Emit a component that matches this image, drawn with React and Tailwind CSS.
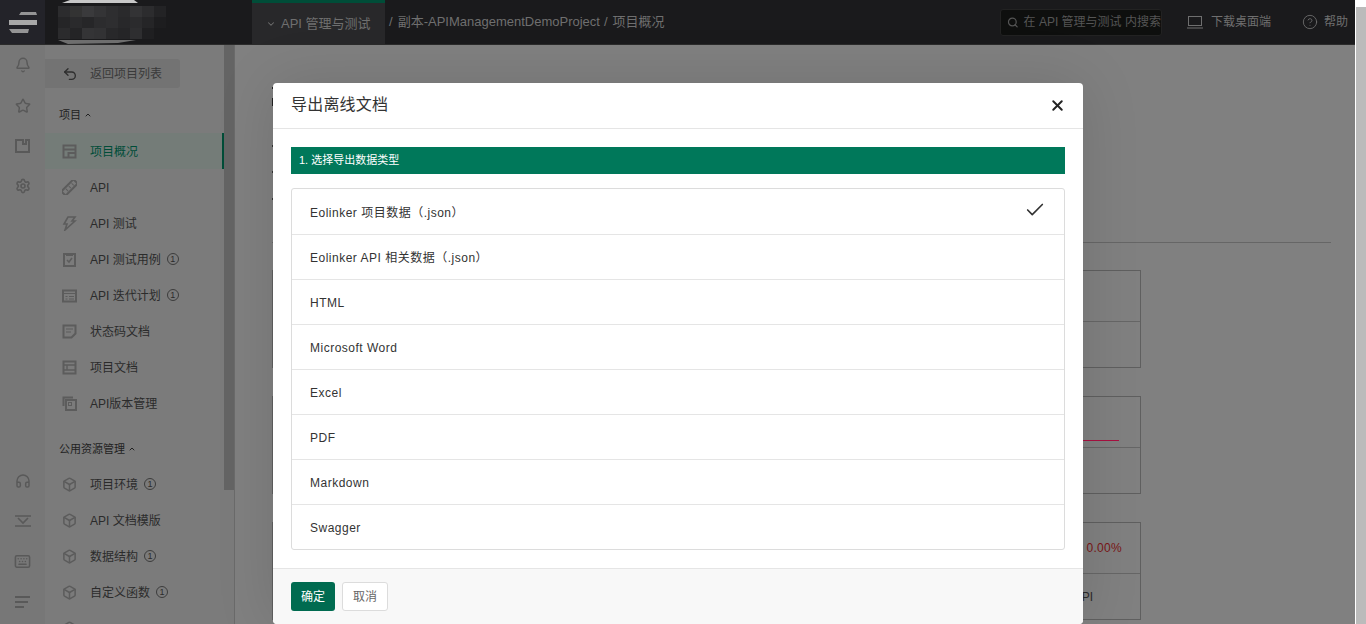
import { Bell, Star, Settings, Headphones, Keyboard, Search, CircleHelp, X, Check, ChevronDown, ChevronUp, Undo2, Box } from "lucide-react";

const font = "font-['Liberation_Sans','Noto_Sans_CJK_SC',sans-serif]";

/* ================= NAV ICONS ================= */
const Glyph = ({ children }) => (
    <svg width="15" height="15" viewBox="0 0 15 15" fill="none" stroke="currentColor" strokeWidth="2" className="text-[#5c5c5c] shrink-0">
        {children}
    </svg>
);

const OverviewIcon = () => <Glyph><rect x="1.5" y="1.5" width="12" height="12" /><path d="M1 5.5h13M6.5 14V9h7" /></Glyph>;
const TicketIcon = () => <Glyph><g transform="rotate(-45 7.5 7.5)"><rect x="-1" y="4.5" width="17" height="6" /><path d="M4 6v3M8 6v3M12 6v3" strokeWidth="1" /></g></Glyph>;
const BoltIcon = () => <Glyph><path d="M6 1h7L10 5h3L3 14l2-6H2z" strokeWidth="1.6" /></Glyph>;
const CaseIcon = () => <Glyph><path d="M2 2h11v12H2zM5 1v2h5V1" /><path d="M5 8l2 2 3-4" strokeWidth="1.5" /></Glyph>;
const PlanIcon = () => <Glyph><rect x="1" y="2.5" width="13" height="11" /><path d="M1 5.5h13M3.5 8.5h2M7 8.5h5M3.5 11h2M7 11h5" strokeWidth="1.2" /></Glyph>;
const DocIcon = () => <Glyph><path d="M1.5 1.5h12v8l-4 4h-8z" /><path d="M4 5h7M4 8h5" strokeWidth="1.2" /></Glyph>;
const FileIcon = () => <Glyph><rect x="1.5" y="1.5" width="12" height="12" /><path d="M1 5h13M1 10h13M5 5v5" strokeWidth="1.4" /></Glyph>;
const VersionIcon = () => <Glyph><path d="M1.5 10V1.5H11" /><rect x="4" y="4" width="10" height="10" /><rect x="6.5" y="6.5" width="3" height="3" strokeWidth="1" /></Glyph>;
const CubeIcon = () => <Box size={15} strokeWidth={2.4} className="text-[#5c5c5c] shrink-0" />;

const projectMenu = [
    { label: "项目概况", icon: OverviewIcon, active: true },
    { label: "API", icon: TicketIcon },
    { label: "API 测试", icon: BoltIcon },
    { label: "API 测试用例", icon: CaseIcon, tip: true },
    { label: "API 迭代计划", icon: PlanIcon, tip: true },
    { label: "状态码文档", icon: DocIcon },
    { label: "项目文档", icon: FileIcon },
    { label: "API版本管理", icon: VersionIcon },
];

const resourceMenu = [
    { label: "项目环境", icon: CubeIcon, tip: true },
    { label: "API 文档模版", icon: CubeIcon },
    { label: "数据结构", icon: CubeIcon, tip: true },
    { label: "自定义函数", icon: CubeIcon, tip: true },
    { label: "", icon: CubeIcon },
];

const exportTypes = [
    "Eolinker 项目数据（.json）",
    "Eolinker API 相关数据（.json）",
    "HTML",
    "Microsoft Word",
    "Excel",
    "PDF",
    "Markdown",
    "Swagger",
];

function Logo() {
    return (
        <svg width="30" height="21" viewBox="0 0 30 21" fill="#a8a8a8">
            <polygon points="13,0 28,0 29,3 11,3" opacity="0.85" />
            <polygon points="1,8 29,8 29,13 1,13" />
            <polygon points="1,17 21,17 20,21 4,21" opacity="0.85" />
        </svg>
    );
}

function Mosaic() {
    const cells = [
        ["#2c2c2e", "#333", "#3a3a3c", "#343436", "#2e2e30", "#2a2a2c", "#333335", "#2c2c2e", "#232325"],
        ["#252527", "#2a2a2c", "#262628", "#2c2c2e", "#2e2e30", "#28282a", "#2b2b2d", "#252527", "#1d1d1f"],
        ["#2b2b2d", "#242426", "#343436", "#323234", "#28282a", "#252527", "#2e2e30", "#1f1f21", "#1a1a1c"],
    ];
    return (
        <svg width="116" height="45" viewBox="0 0 116 45">
            <polygon points="4,3 12,0 76,0 80,3" fill="#c8c8c8" />
            {cells.map((row, y) =>
                row.map((c, x) => <rect key={`${x}-${y}`} x={x * 12} y={6 + y * 11} width="12" height="11" fill={c} />)
            )}
            <polygon points="0,40 78,40 60,43 10,44" fill="#6e6e6e" />
        </svg>
    );
}

function Tip() {
    return (
        <span className="w-3 h-3 rounded-full border border-[#3c3c3c] flex items-center justify-center text-[9px] leading-none text-[#2b2b2b]">
            1
        </span>
    );
}

function NavItem({ item }) {
    const Icon = item.icon;
    return (
        <div className={`h-9 flex items-center gap-[13px] pl-[17px] text-xs text-[#2b2b2b] ${item.active ? "bg-[#747c78] border-r-2 border-[#004d38]" : ""}`}>
            <Icon />
            <span className={`pt-0.5 ${item.active ? "text-[#004d38]" : ""}`}>{item.label}</span>
            {item.tip && <span className="-ml-[7px]"><Tip /></span>}
        </div>
    );
}

function StatBox({ children, foot }) {
    return (
        <div className="h-[98px] border border-[#5f5f5f] flex flex-col">
            <div className="h-[51px] border-b border-[#666] flex items-center justify-end pr-[18px]">{children}</div>
            <div className="flex-1 flex items-center justify-end pr-[47px] text-[#2b2b2b]">{foot}</div>
        </div>
    );
}

export default function App() {
    return (
        <div className={`flex h-[624px] overflow-hidden bg-white ${font}`}>
            <div className="w-[1355px] h-full flex flex-col relative bg-[#808080]">
                {/* top bar */}
                <header className="h-[45px] shrink-0 flex items-center bg-[#1a1a1c] border-b border-[#2b2b2b] text-[#6f6f6f]">
                    <div className="w-[45px] h-full bg-[#232329] flex items-center justify-center">
                        <Logo />
                    </div>
                    <div className="w-[207px] h-full pl-[13px]">
                        <Mosaic />
                    </div>
                    <div className="w-[133px] h-full bg-[#28282a] border-t-[3px] border-[#004d38] flex items-center gap-[5px] pl-[14px] text-[13px]">
                        <ChevronDown size={10} strokeWidth={2.5} />
                        <span>API 管理与测试</span>
                    </div>
                    <div className="pl-1 text-[13px] whitespace-nowrap flex">
                        <span>/</span>
                        <span className="ml-[5px]">副本-APIManagementDemoProject</span>
                        <span className="ml-1">/</span>
                        <span className="ml-[5px]">项目概况</span>
                    </div>
                    <div className="ml-auto w-[162px] h-[27px] rounded-[3px] bg-[#0e0f0e] border border-[#222] flex items-center gap-[5px] pl-[6px] text-xs text-[#555] whitespace-nowrap">
                        <Search size={13} strokeWidth={2.5} />
                        <span>在 API 管理与测试 内搜索</span>
                    </div>
                    <div className="ml-[25px] flex items-center gap-2 text-xs">
                        <svg width="16" height="14" viewBox="0 0 16 14" fill="none" stroke="currentColor">
                            <rect x="1.5" y="1.5" width="13" height="9" />
                            <path d="M0 13h16" />
                        </svg>
                        <span>下载桌面端</span>
                    </div>
                    <div className="ml-[31px] mr-[7px] flex items-center gap-[6px] text-xs">
                        <CircleHelp size={16} strokeWidth={1.3} />
                        <span>帮助</span>
                    </div>
                </header>

                <div className="flex-1 flex min-h-0">
                    {/* icon rail */}
                    <aside className="w-[45px] shrink-0 bg-[#777777] flex flex-col items-center text-[#595959] pt-[12px] pb-[15px]">
                        <div className="flex flex-col items-center gap-[25px]">
                            <Bell size={16} strokeWidth={2.2} />
                            <Star size={16} strokeWidth={2.2} />
                            <svg width="15" height="14" viewBox="0 0 15 14" fill="none" stroke="currentColor" strokeWidth="2">
                                <path d="M1 1v12h13V1h-3v4H8V1z" />
                            </svg>
                            <Settings size={16} strokeWidth={2.4} />
                        </div>
                        <div className="mt-auto flex flex-col items-center gap-[26px]">
                            <Headphones size={16} strokeWidth={2.2} className="-mt-px" />
                            <svg width="16" height="12" viewBox="0 0 16 12" fill="none" stroke="currentColor" strokeWidth="1.6">
                                <path d="M0 1h16M3 3l5 5 5-5M0 11h16" />
                            </svg>
                            <Keyboard size={17} strokeWidth={2.2} />
                            <svg width="15" height="13" viewBox="0 0 15 13" fill="currentColor">
                                <rect width="15" height="2" />
                                <rect y="5" width="13" height="2" />
                                <rect y="10" width="9" height="2" />
                            </svg>
                        </div>
                    </aside>

                    {/* project nav */}
                    <nav className="w-[190px] shrink-0 flex bg-[#7b7b7b] border-r border-[#6a6a6a] overflow-hidden">
                        <div className="w-[179px] shrink-0">
                            <div className="mt-[14px] h-[29px] w-[135px] rounded-r-[3px] bg-[#737373] flex items-center gap-3 pl-[17px] text-xs text-[#3a3a3a]">
                                <Undo2 size={16} strokeWidth={2} className="text-[#2e2e2e]" />
                                <span>返回项目列表</span>
                            </div>
                            <div className="h-[26px] mt-[14px] mb-[5px] flex items-center gap-[3px] pl-[14px] text-[11px] text-[#222]">
                                项目 <ChevronUp size={8} strokeWidth={3} />
                            </div>
                            {projectMenu.map(item => <NavItem key={item.label} item={item} />)}
                            <div className="h-[26px] mt-[15px] mb-1 flex items-center gap-[3px] pl-[14px] text-[11px] text-[#222]">
                                公用资源管理 <ChevronUp size={8} strokeWidth={3} />
                            </div>
                            {resourceMenu.map((item, i) => <NavItem key={i} item={item} />)}
                        </div>
                        <div className="w-[10px] h-[445px] bg-[#646464]" />
                    </nav>

                    {/* page behind the dialog: only its left edge peeks out */}
                    <main className="flex-1 pl-[37px] pr-[24px] text-xs min-w-0">
                        <div className="h-[198px] border-b border-[#666] pt-[42px]">
                            <div className="w-px h-[2px] bg-[#222]" />
                            <div className="w-px h-[8px] mt-[9px] bg-[#222]" />
                            <div className="w-px h-[2px] mt-[39px] bg-[#333]" />
                            <div className="w-px h-[2px] mt-[24px] bg-[#333]" />
                            <div className="w-px h-[2px] mt-[25px] bg-[#333]" />
                        </div>
                        <div className="w-[869px] mt-[27px] flex flex-col gap-[28px]">
                            <StatBox />
                            <StatBox>
                                <div className="self-start w-[97px] h-px mt-[43px] mr-[3px] bg-[#a81040]" />
                            </StatBox>
                            <StatBox foot="API">
                                <span className="text-[#7a1616] tracking-[0.3px]">0.00%</span>
                            </StatBox>
                        </div>
                    </main>
                </div>

                {/* export dialog */}
                <div className="absolute left-[273px] top-[83px] w-[810px] h-[541px] bg-white rounded-[4px] flex flex-col shadow-[0_0_60px_rgba(0,0,0,0.12)]">
                    <div className="h-[46px] shrink-0 border-b border-[#e5e5e5] flex items-center justify-between pl-[18px] pr-[17px] pb-px">
                        <span className="text-base text-[#333] tracking-[0.2px]">导出离线文档</span>
                        <X size={17} strokeWidth={2.8} className="text-[#222]" />
                    </div>
                    <div className="px-[18px] pt-[18px]">
                        <div className="h-[27px] bg-[#00785a] flex items-center pl-2 text-[11px] text-white">
                            1. 选择导出数据类型
                        </div>
                        <ul className="mt-[14px] border border-[#dcdcdc] rounded-[3px]">
                            {exportTypes.map((type, i) => (
                                <li key={type} className={`h-[45px] flex items-center justify-between pl-[18px] pr-[18px] text-xs text-[#333] tracking-[0.5px] ${i > 0 ? "border-t border-[#e5e5e5]" : ""}`}>
                                    <span className="pt-0.5">{type}</span>
                                    {i === 0 && <Check size={22} strokeWidth={1.8} className="text-[#333] -mt-[3px]" />}
                                </li>
                            ))}
                        </ul>
                    </div>
                    <div className="mt-[18px] flex-1 bg-[#f8f8f8] border-t border-[#e5e5e5] rounded-b-[4px] pl-[18px] pt-[13px] flex items-start gap-[7px]">
                        <button className="w-[44px] h-[29px] rounded-[3px] bg-[#006b50] text-white text-xs">确定</button>
                        <button className="w-[46px] h-[29px] rounded-[3px] bg-white border border-[#dcdcdc] text-[#666] text-xs">取消</button>
                    </div>
                </div>
            </div>

            {/* page scrollbar */}
            <div className="w-[11px] bg-white pt-[7px] pl-px">
                <div className="h-full bg-[#bbbbbb]" />
            </div>
        </div>
    );
}
